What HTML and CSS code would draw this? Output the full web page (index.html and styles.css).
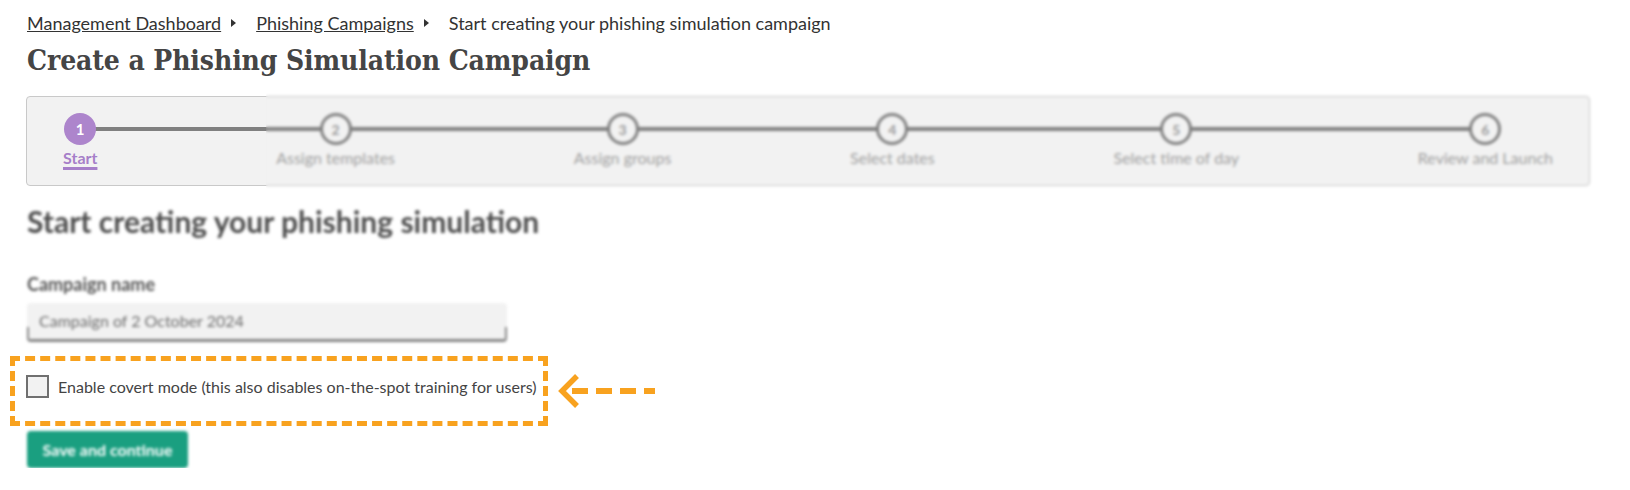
FILE: index.html
```html
<!DOCTYPE html>
<html lang="en">
<head>
  <meta charset="utf-8">
  <title>Create a Phishing Simulation Campaign</title>
  <link rel="stylesheet" href="styles.css">
</head>
<body>
<div class="page">

  <nav class="crumbs">
    <a href="#">Management Dashboard</a>
    <span class="sep"></span>
    <a href="#">Phishing Campaigns</a>
    <span class="sep"></span>
    <span class="here">Start creating your phishing simulation campaign</span>
  </nav>

  <h1 class="title">Create a Phishing Simulation Campaign</h1>

  <div class="stepper">
    <ol class="steps">
      <li class="step current"><span class="dot">1</span><a class="label" href="#">Start</a></li>
      <li class="step"><span class="dot">2</span><span class="label">Assign templates</span></li>
      <li class="step"><span class="dot">3</span><span class="label">Assign groups</span></li>
      <li class="step"><span class="dot">4</span><span class="label">Select dates</span></li>
      <li class="step"><span class="dot">5</span><span class="label">Select time of day</span></li>
      <li class="step"><span class="dot">6</span><span class="label">Review and Launch</span></li>
    </ol>
    <div class="redact"></div>
  </div>

  <div class="form">
    <h2 class="subtitle blurred">Start creating your phishing simulation</h2>

    <div class="field-label blurred">Campaign name</div>
    <div class="input blurred">Campaign of 2 October 2024</div>

    <div class="callout-row">
      <div class="callout">
        <label class="check">
          <span class="box"></span>
          Enable covert mode (this also disables on-the-spot training for users)
        </label>
      </div>
      <svg class="pointer" width="100" height="40" viewBox="0 0 100 40">
        <polyline points="20,5 5,20 20,35" fill="none" stroke="#f8a21f" stroke-width="5.5"/>
        <line x1="15" y1="20" x2="98" y2="20" stroke="#f8a21f" stroke-width="6" stroke-dasharray="16 8"/>
      </svg>
    </div>

    <button class="save blurred">Save and continue</button>
  </div>

</div>
</body>
</html>
```

FILE: styles.css
```css
body {
  margin: 0;
  background-color: #ffffff;
  font-family: Lato, "Noto Sans", sans-serif;
  color: #333333;
}

.page {
  padding: 12px 0 0 27px;
}

/* breadcrumb */
.crumbs {
  display: flex;
  align-items: center;
  font-size: 18px;
  line-height: 22px;
  color: #333333;
}
.crumbs a {
  color: #333333;
  text-decoration: underline;
}
.crumbs .sep {
  width: 0;
  height: 0;
  border-left: 5px solid #333333;
  border-top: 4.5px solid transparent;
  border-bottom: 4.5px solid transparent;
  margin: 0 20px 0 10px;
}

.title {
  margin: 9px 0 0 0;
  font-family: "DejaVu Serif Condensed", "DejaVu Serif", serif;
  font-stretch: condensed;
  font-weight: bold;
  font-size: 28px;
  letter-spacing: -0.1px;
  line-height: 36px;
  color: #454545;
}

/* stepper */
.stepper {
  position: relative;
  margin: 17px 0 0 -1px;
  width: 1562px;
  height: 88px;
  border: 1px solid #c9c9c9;
  border-radius: 4px;
  background-color: #f2f2f2;
}
.steps {
  position: relative;
  display: flex;
  justify-content: space-between;
  margin: 0;
  padding: 16px 36px 0 36px;
  list-style: none;
}
.steps::before {
  content: "";
  position: absolute;
  left: 54px;
  right: 103px;
  top: 30px;
  height: 4px;
  background-color: #808080;
}
.step {
  position: relative;
  display: flex;
  flex-direction: column;
  align-items: center;
}
.dot {
  box-sizing: border-box;
  width: 32px;
  height: 32px;
  border: 3px solid #808080;
  border-radius: 50%;
  background-color: #f2f2f2;
  display: flex;
  align-items: center;
  justify-content: center;
  font-size: 14px;
  font-weight: bold;
  color: #9a9a9a;
}
.label {
  margin-top: 2px;
  font-size: 16px;
  line-height: 22px;
  color: #a0a0a0;
  white-space: nowrap;
}
.current .dot {
  border: none;
  background-color: #ad85cc;
  color: #ffffff;
  font-size: 15px;
}
.current .label {
  color: #a67fc9;
  font-weight: bold;
  text-decoration: underline;
  text-decoration-thickness: 3px;
  text-underline-offset: 3px;
}
.redact {
  position: absolute;
  left: 239px;
  right: -8px;
  top: -4px;
  bottom: -6px;
  backdrop-filter: blur(1.6px);
}

/* form */
.blurred {
  filter: blur(1.4px);
}
.subtitle {
  margin: 17px 0 0 0;
  font-size: 30px;
  line-height: 36px;
  font-weight: bold;
  color: #4d4d4d;
}
.field-label {
  margin-top: 34px;
  font-size: 18px;
  line-height: 22px;
  font-weight: bold;
  color: #555555;
}
.input {
  box-sizing: border-box;
  margin-top: 8px;
  width: 480px;
  height: 39px;
  padding: 8px 0 0 12px;
  border-bottom: 3px solid #858585;
  border-radius: 4px;
  background-color: #f2f2f2;
  background-image: linear-gradient(#858585, #858585), linear-gradient(#858585, #858585);
  background-position: left bottom, right bottom;
  background-size: 2px 12px, 2px 12px;
  background-repeat: no-repeat;
  font-size: 16px;
  color: #6b6b6b;
}

.callout-row {
  display: flex;
  align-items: center;
  margin: 14px 0 0 -17px;
}
.callout {
  box-sizing: border-box;
  width: 538px;
  height: 70px;
  padding: 14px 0 0 11px;
  border: 5.5px dashed #f8a21f;
}
.check {
  display: flex;
  align-items: center;
  font-size: 16px;
  line-height: 23px;
  color: #444444;
}
.check .box {
  box-sizing: border-box;
  width: 23px;
  height: 23px;
  margin-right: 9px;
  border: 2px solid #707070;
  background-color: #f2f2f2;
}
.pointer {
  margin-left: 9px;
}

.save {
  margin-top: 5px;
  width: 161px;
  height: 37px;
  border: none;
  border-radius: 4px;
  background-color: #1a9f80;
  color: #ffffff;
  font-family: Lato, "Noto Sans", sans-serif;
  font-size: 16px;
  font-weight: bold;
}
```
